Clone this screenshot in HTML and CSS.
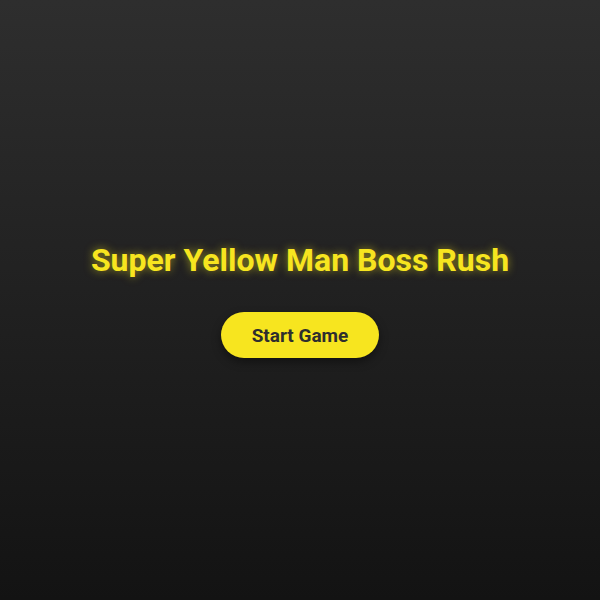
FILE: index.html
```html
<!DOCTYPE html>
<html lang="en">
<head>
    <meta charset="UTF-8">
    <meta name="viewport" content="width=device-width, initial-scale=1.0">
    <title>Super Yellow Man Boss Rush</title>
    <link rel="stylesheet" href="styles.css">
</head>
<body>
<div class="menu">
    <h1 class="title">Super Yellow Man Boss Rush</h1>
    <button type="button" class="btn-start">Start Game</button>
</div>
</body>
</html>
```
FILE: styles.css
```css
/* Tela inicial */
body {
    margin: 0;
    height: 100vh;
    font-family: Roboto, "Liberation Sans", Arial, sans-serif;
    background: linear-gradient(to bottom, #2e2e2e, #131313);
    display: flex;
    justify-content: center;
    align-items: center;
}

.menu {
    display: flex;
    flex-direction: column;
    align-items: center;
    margin-top: -2px;
}

.title {
    margin: 0 0 32px;
    font-size: 32px;
    font-weight: 700;
    line-height: 40px;
    color: #f7e51f;
    text-shadow: 0 0 8px rgba(247, 229, 31, 0.55);
}

.btn-start {
    width: 158px;
    height: 46px;
    border: none;
    border-radius: 23px;
    background-color: #f7e51f;
    color: #2e2e2e;
    font-family: inherit;
    font-size: 19px;
    font-weight: 700;
    cursor: pointer;
    box-shadow: 0 4px 10px rgba(0, 0, 0, 0.4);
}
```
